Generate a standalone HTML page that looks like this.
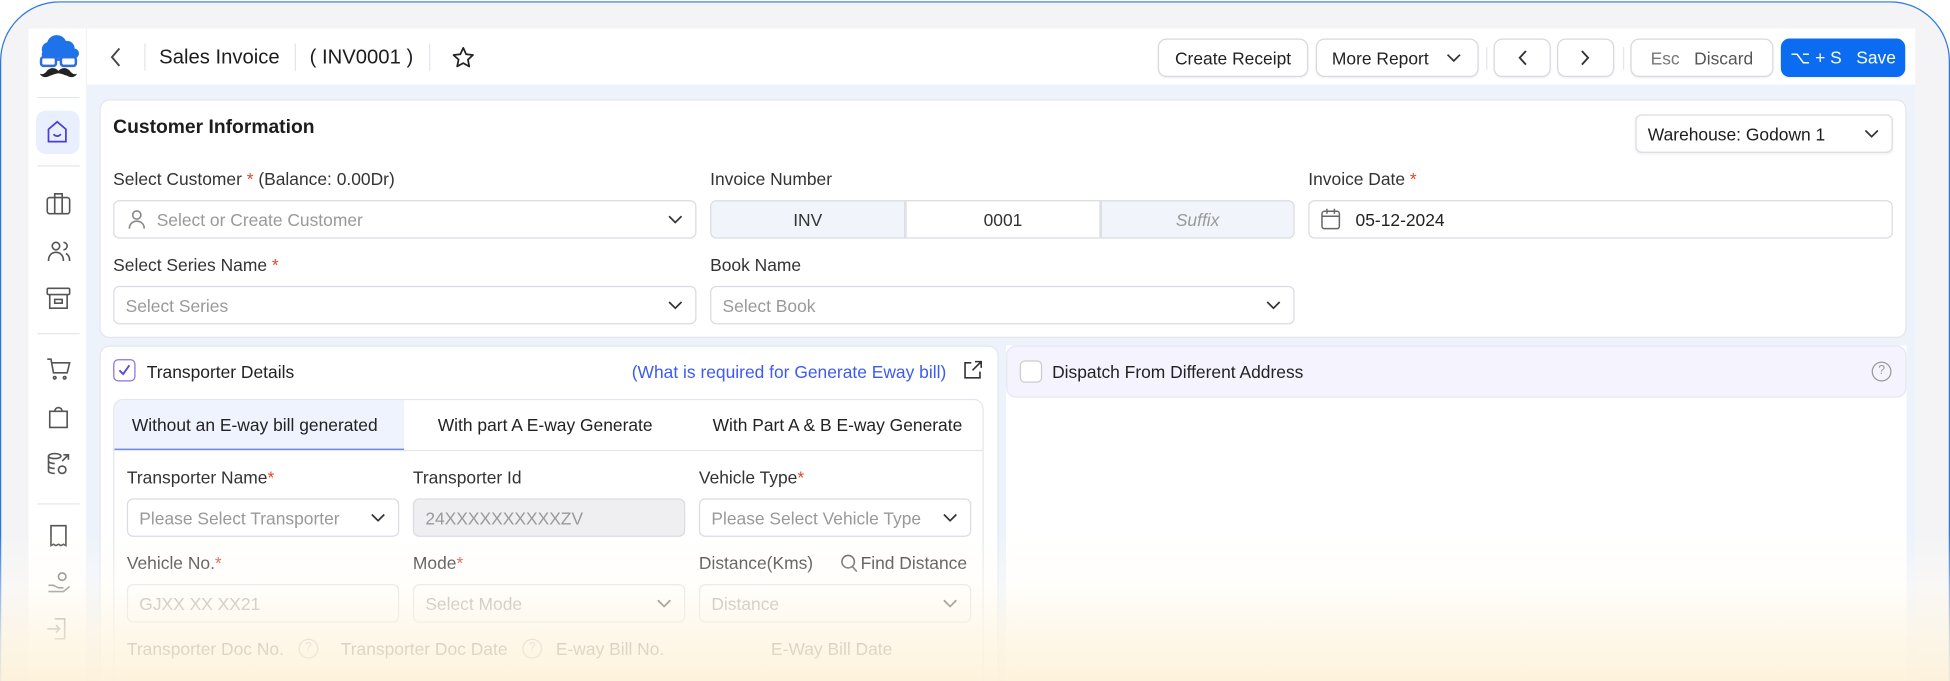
<!DOCTYPE html>
<html><head><meta charset="utf-8"><style>
*{box-sizing:border-box;margin:0;padding:0}
html,body{width:1950px;height:681px;overflow:hidden;background:#fff}
#s{position:absolute;left:0;top:0;width:1568px;height:548px;overflow:hidden;transform:scale(1.24362,1.2427);transform-origin:0 0;font-family:"Liberation Sans",sans-serif;color:#222}
.a{position:absolute}
.frame{left:0;top:1px;width:1568px;height:547px;border:1.5px solid #2a78e4;border-bottom:0;border-radius:48px 48px 0 0;background:#f4f4f6}
.sb{left:23px;top:23px;width:46px;height:525px;background:#fff}
.hd{left:70px;top:23px;width:1470px;height:45px;background:#fff}
.ct{left:70px;top:68px;width:1470px;height:480px;background:#eef3fb}
.card{background:#fff;border:1px solid #e3e6ec;border-radius:8px}
.btn{top:31px;height:31px;border:1px solid #d6d9df;border-radius:7px;background:#fff;font-size:14px;display:flex;align-items:center;justify-content:center;color:#222;box-shadow:0 1px 1px rgba(0,0,0,.05)}
.lbl{font-size:14px;color:#333}
.r{color:#e5482d}
.inp{height:31px;border:1px solid #d9dce2;border-radius:5px;background:#fff;font-size:14px;color:#999;display:flex;align-items:center;padding-left:9px}
.sep{width:1px;background:#e4e6ea}
.chev{position:absolute;right:10px;top:9px}
</style></head><body><div id="s">
<div class="a frame"></div>
<div class="a sb"></div>
<div class="a hd"></div>
<div class="a ct"></div>

<svg class="a" style="left:30px;top:28px" width="34" height="38" viewBox="0 0 34 38">
<path d="M4 14a6 6 0 0 1 4-8 8 8 0 0 1 15-1 6 6 0 0 1 7 6 4 4 0 0 1-1 8H5a4 4 0 0 1-1-5z" fill="#1f73ea"/>
<rect x="3" y="18" width="12" height="7" rx="2" fill="none" stroke="#2a6ee0" stroke-width="2"/><rect x="19" y="18" width="12" height="7" rx="2" fill="none" stroke="#2a6ee0" stroke-width="2"/><path d="M15 20h4" stroke="#2a6ee0" stroke-width="2"/>
<path d="M17 29c-3-3-7-3-10 1-2 2-4 2-5 1 1 3 5 4 8 2 3-1 5-2 7-2 2 0 4 1 7 2 3 2 7 1 8-2-1 1-3 1-5-1-3-4-7-4-10-1z" fill="#222"/>
</svg>
<div class="a" style="left:30px;top:78px;width:34px;height:1px;background:#e4e6ea"></div>
<div class="a" style="left:29px;top:89px;width:35px;height:35px;border-radius:8px;background:#e9effc"></div>
<svg class="a" style="left:37px;top:96px" width="18" height="20" viewBox="0 0 18 20" fill="none" stroke="#4b3fd6" stroke-width="1.4"><path d="M2 8l7-6 7 6v10H2z"/><path d="M6 12q3 3 6 0"/></svg>
<div class="a" style="left:30px;top:133px;width:34px;height:1px;background:#e4e6ea"></div>
<svg class="a" style="left:37px;top:154px" width="20" height="20" viewBox="0 0 20 20" fill="none" stroke="#555" stroke-width="1.3"><rect x="1" y="5" width="18" height="13" rx="2"/><path d="M7 5V2h6v3M7 5v13M13 5v13"/></svg>
<svg class="a" style="left:37px;top:192px" width="20" height="20" viewBox="0 0 20 20" fill="none" stroke="#555" stroke-width="1.3"><circle cx="8" cy="6" r="3"/><path d="M2 18c0-5 3-7 6-7s6 2 6 7M14 3a3 3 0 0 1 0 6M16 12c2 1 3 3 3 6"/></svg>
<svg class="a" style="left:37px;top:230px" width="20" height="20" viewBox="0 0 20 20" fill="none" stroke="#555" stroke-width="1.3"><rect x="1" y="2" width="18" height="5" rx="1"/><path d="M3 7v11h14V7M7 11h6v3H7z"/></svg>
<div class="a" style="left:30px;top:268px;width:34px;height:1px;background:#e4e6ea"></div>
<svg class="a" style="left:37px;top:287px" width="20" height="20" viewBox="0 0 20 20" fill="none" stroke="#555" stroke-width="1.3"><path d="M1 2h3l2 11h11l2-8H5"/><circle cx="7" cy="17" r="1"/><circle cx="15" cy="17" r="1"/></svg>
<svg class="a" style="left:37px;top:325px" width="20" height="20" viewBox="0 0 20 20" fill="none" stroke="#555" stroke-width="1.3"><path d="M3 6h14v13H3zM7 6a3 3 0 0 1 6 0"/></svg>
<svg class="a" style="left:37px;top:363px" width="20" height="20" viewBox="0 0 20 20" fill="none" stroke="#555" stroke-width="1.3"><ellipse cx="7" cy="4" rx="5" ry="2"/><path d="M2 4v12c0 1 2 2 5 2M2 8c0 1 2 2 5 2M2 12c0 1 2 2 5 2M13 8l5-5M14 3h4v4"/><circle cx="13" cy="15" r="3"/></svg>
<div class="a" style="left:30px;top:405px;width:34px;height:1px;background:#e4e6ea"></div>
<svg class="a" style="left:37px;top:421px" width="20" height="20" viewBox="0 0 20 20" fill="none" stroke="#555" stroke-width="1.3"><path d="M4 2h12v16l-2-1-2 1-2-1-2 1-2-1-2 1z"/></svg>
<svg class="a" style="left:37px;top:459px" width="20" height="20" viewBox="0 0 20 20" fill="none" stroke="#666" stroke-width="1.3"><circle cx="13" cy="5" r="3"/><path d="M2 12h4l4 2h4M2 17h12l5-4"/></svg>
<svg class="a" style="left:37px;top:496px" width="20" height="20" viewBox="0 0 20 20" fill="none" stroke="#777" stroke-width="1.3"><path d="M7 2h8v16H7M1 10h10M8 7l3 3-3 3"/></svg>

<svg class="a" style="left:87px;top:38px" width="12" height="16" viewBox="0 0 12 16" fill="none" stroke="#444" stroke-width="1.5"><path d="M9 1L3 8l6 7"/></svg>
<div class="a sep" style="left:116px;top:35px;height:22px"></div>
<div class="a" style="left:128px;top:37px;font-size:16.3px;font-weight:500;color:#1d1d1f">Sales Invoice</div>
<div class="a sep" style="left:237px;top:35px;height:22px"></div>
<div class="a" style="left:249px;top:37px;font-size:16.3px;color:#1d1d1f">( INV0001 )</div>
<div class="a sep" style="left:345px;top:35px;height:22px"></div>
<svg class="a" style="left:363px;top:37px" width="19" height="18" viewBox="0 0 24 23" fill="none" stroke="#222" stroke-width="1.8"><path d="M12 2l3 6.5 7 .8-5.2 4.8 1.4 7L12 17.6 5.8 21l1.4-7L2 9.3l7-.8z" stroke-linejoin="round"/></svg>

<div class="a btn" style="left:931px;width:121px">Create Receipt</div>
<div class="a btn" style="left:1058px;width:131px;justify-content:flex-start;padding-left:12px">More Report<svg style="margin-left:14px" width="12" height="8" viewBox="0 0 12 8" fill="none" stroke="#333" stroke-width="1.4"><path d="M1 1l5 5 5-5"/></svg></div>
<div class="a sep" style="left:1195px;top:38px;height:18px"></div>
<div class="a btn" style="left:1201px;width:46px"><svg width="8" height="13" viewBox="0 0 8 13" fill="none" stroke="#333" stroke-width="1.5"><path d="M7 1L2 6.5 7 12"/></svg></div>
<div class="a btn" style="left:1252px;width:46px"><svg width="8" height="13" viewBox="0 0 8 13" fill="none" stroke="#333" stroke-width="1.5"><path d="M1 1l5 5.5L1 12"/></svg></div>
<div class="a sep" style="left:1305px;top:38px;height:18px"></div>
<div class="a btn" style="left:1311px;width:115px;color:#555"><span style="color:#777">Esc</span>&nbsp;&nbsp; Discard</div>
<div class="a btn" style="left:1432px;width:100px;background:#0b6cf1;border-color:#0b6cf1;color:#fff">⌥ + S&nbsp;&nbsp; Save</div>

<div class="a card" style="left:80px;top:80px;width:1453px;height:192px"></div>
<div class="a" style="left:91px;top:94px;font-size:15.5px;font-weight:bold;color:#1d1d1f">Customer Information</div>
<div class="a inp" style="left:1315px;top:92px;width:207px;height:31px;color:#1d1d1f;box-shadow:0 1px 2px rgba(0,0,0,.06)">Warehouse: Godown 1<svg class="chev" width="12" height="8" viewBox="0 0 12 8" fill="none" stroke="#333" stroke-width="1.4" style="top:11px"><path d="M1 1l5 5 5-5"/></svg></div>

<div class="a lbl" style="left:91px;top:136px">Select Customer <span class="r">*</span> (Balance: 0.00Dr)</div>
<div class="a inp" style="left:91px;top:161px;width:469px;padding-left:34px">Select or Create Customer<svg class="chev" width="12" height="8" viewBox="0 0 12 8" fill="none" stroke="#333" stroke-width="1.4" style="top:11px"><path d="M1 1l5 5 5-5"/></svg></div>
<svg class="a" style="left:103px;top:168px" width="14" height="17" viewBox="0 0 14 17" fill="none" stroke="#888" stroke-width="1.3"><circle cx="7" cy="5" r="3.3"/><path d="M1 16c0-4 3-6 6-6s6 2 6 6"/></svg>
<div class="a lbl" style="left:571px;top:136px">Invoice Number</div>
<div class="a inp" style="left:571px;top:161px;width:157px;background:#f1f4fa;justify-content:center;padding:0;color:#333;border-radius:5px 0 0 5px">INV</div>
<div class="a inp" style="left:728px;top:161px;width:157px;justify-content:center;padding:0;color:#333;border-radius:0">0001</div>
<div class="a inp" style="left:885px;top:161px;width:156px;background:#f1f4fa;justify-content:center;padding:0;color:#999;font-style:italic;border-radius:0 5px 5px 0">Suffix</div>
<div class="a lbl" style="left:1052px;top:136px">Invoice Date <span class="r">*</span></div>
<div class="a inp" style="left:1052px;top:161px;width:470px;padding-left:37px;color:#222">05-12-2024</div>
<svg class="a" style="left:1062px;top:167px" width="16" height="18" viewBox="0 0 16 18" fill="none" stroke="#666" stroke-width="1.2"><rect x="1" y="3" width="14" height="14" rx="2"/><path d="M1 7h14M5 1v4M11 1v4"/></svg>

<div class="a lbl" style="left:91px;top:205px">Select Series Name <span class="r">*</span></div>
<div class="a inp" style="left:91px;top:230px;width:469px">Select Series<svg class="chev" width="12" height="8" viewBox="0 0 12 8" fill="none" stroke="#333" stroke-width="1.4" style="top:11px"><path d="M1 1l5 5 5-5"/></svg></div>
<div class="a lbl" style="left:571px;top:205px">Book Name</div>
<div class="a inp" style="left:571px;top:230px;width:470px">Select Book<svg class="chev" width="12" height="8" viewBox="0 0 12 8" fill="none" stroke="#333" stroke-width="1.4" style="top:11px"><path d="M1 1l5 5 5-5"/></svg></div>

<div class="a card" style="left:80px;top:278px;width:723px;height:290px"></div>
<div class="a" style="left:91px;top:289px;width:18px;height:18px;border:1.5px solid #8a72e0;border-radius:4px"></div>
<svg class="a" style="left:94px;top:292px" width="12" height="12" viewBox="0 0 12 12" fill="none" stroke="#5a48d8" stroke-width="1.5"><path d="M2 6l3 3 5-7"/></svg>
<div class="a lbl" style="left:118px;top:291px;color:#222">Transporter Details</div>
<div class="a" style="left:508px;top:291px;font-size:14px;color:#3d5af1">(What is required for Generate Eway bill)</div>
<svg class="a" style="left:775px;top:290px" width="15" height="15" viewBox="0 0 15 15" fill="none" stroke="#333" stroke-width="1.3"><path d="M6 2H1v12h12V9M9 1h5v5M14 1L7 8"/></svg>
<div class="a" style="left:91px;top:321px;width:700px;height:250px;border:1px solid #e3e6ec;border-radius:8px"></div>
<div class="a" style="left:92px;top:322px;width:233px;height:40px;background:#eef3fd;border-bottom:1.5px solid #3b5ee8;border-radius:7px 0 0 0"></div>
<div class="a" style="left:92px;top:362px;width:698px;height:1px;background:#e3e6ec"></div>
<div class="a lbl" style="left:106px;top:334px;color:#222">Without an E-way bill generated</div>
<div class="a lbl" style="left:352px;top:334px;color:#222">With part A E-way Generate</div>
<div class="a lbl" style="left:573px;top:334px;color:#222">With Part A &amp; B E-way Generate</div>

<div class="a lbl" style="left:102px;top:376px">Transporter Name<span class="r">*</span></div>
<div class="a inp" style="left:102px;top:401px;width:219px">Please Select Transporter<svg class="chev" width="12" height="8" viewBox="0 0 12 8" fill="none" stroke="#333" stroke-width="1.4" style="top:11px"><path d="M1 1l5 5 5-5"/></svg></div>
<div class="a lbl" style="left:332px;top:376px">Transporter Id</div>
<div class="a inp" style="left:332px;top:401px;width:219px;background:#efeff2">24XXXXXXXXXXZV</div>
<div class="a lbl" style="left:562px;top:376px">Vehicle Type<span class="r">*</span></div>
<div class="a inp" style="left:562px;top:401px;width:219px">Please Select Vehicle Type<svg class="chev" width="12" height="8" viewBox="0 0 12 8" fill="none" stroke="#333" stroke-width="1.4" style="top:11px"><path d="M1 1l5 5 5-5"/></svg></div>

<div class="a lbl" style="left:102px;top:445px">Vehicle No.<span class="r">*</span></div>
<div class="a inp" style="left:102px;top:470px;width:219px">GJXX XX XX21</div>
<div class="a lbl" style="left:332px;top:445px">Mode<span class="r">*</span></div>
<div class="a inp" style="left:332px;top:470px;width:219px">Select Mode<svg class="chev" width="12" height="8" viewBox="0 0 12 8" fill="none" stroke="#333" stroke-width="1.4" style="top:11px"><path d="M1 1l5 5 5-5"/></svg></div>
<div class="a lbl" style="left:562px;top:445px">Distance(Kms)</div>
<svg class="a" style="left:676px;top:446px" width="14" height="15" viewBox="0 0 14 15" fill="none" stroke="#555" stroke-width="1.3"><circle cx="6" cy="6" r="5"/><path d="M9.5 10l3.5 4"/></svg>
<div class="a lbl" style="left:692px;top:445px">Find Distance</div>
<div class="a inp" style="left:562px;top:470px;width:219px">Distance<svg class="chev" width="12" height="8" viewBox="0 0 12 8" fill="none" stroke="#333" stroke-width="1.4" style="top:11px"><path d="M1 1l5 5 5-5"/></svg></div>

<div class="a lbl" style="left:102px;top:514px">Transporter Doc No.</div>
<div class="a" style="left:240px;top:514px;width:16px;height:16px;border:1px solid #999;border-radius:50%;font-size:10px;text-align:center;line-height:14px;color:#999">?</div>
<div class="a lbl" style="left:274px;top:514px">Transporter Doc Date</div>
<div class="a" style="left:420px;top:514px;width:16px;height:16px;border:1px solid #999;border-radius:50%;font-size:10px;text-align:center;line-height:14px;color:#999">?</div>
<div class="a lbl" style="left:447px;top:514px">E-way Bill No.</div>
<div class="a lbl" style="left:620px;top:514px">E-Way Bill Date</div>

<div class="a" style="left:809px;top:278px;width:724px;height:270px;background:#fff"></div>
<div class="a" style="left:809px;top:278px;width:724px;height:42px;background:#f5f3fd;border:1px solid #e8e6f3;border-radius:8px"></div>
<div class="a" style="left:820px;top:290px;width:18px;height:18px;border:1px solid #ccc;border-radius:4px;background:#fff"></div>
<div class="a lbl" style="left:846px;top:291px;color:#222">Dispatch From Different Address</div>
<div class="a" style="left:1505px;top:291px;width:16px;height:16px;border:1px solid #999;border-radius:50%;font-size:10px;text-align:center;line-height:14px;color:#999">?</div>

<div class="a" style="left:0;top:430px;width:1568px;height:118px;background:linear-gradient(to bottom,rgba(255,255,255,0) 0%,rgba(255,252,246,.45) 35%,rgba(254,246,228,.8) 70%,rgba(253,242,218,.93) 100%)"></div>
</div></body></html>
